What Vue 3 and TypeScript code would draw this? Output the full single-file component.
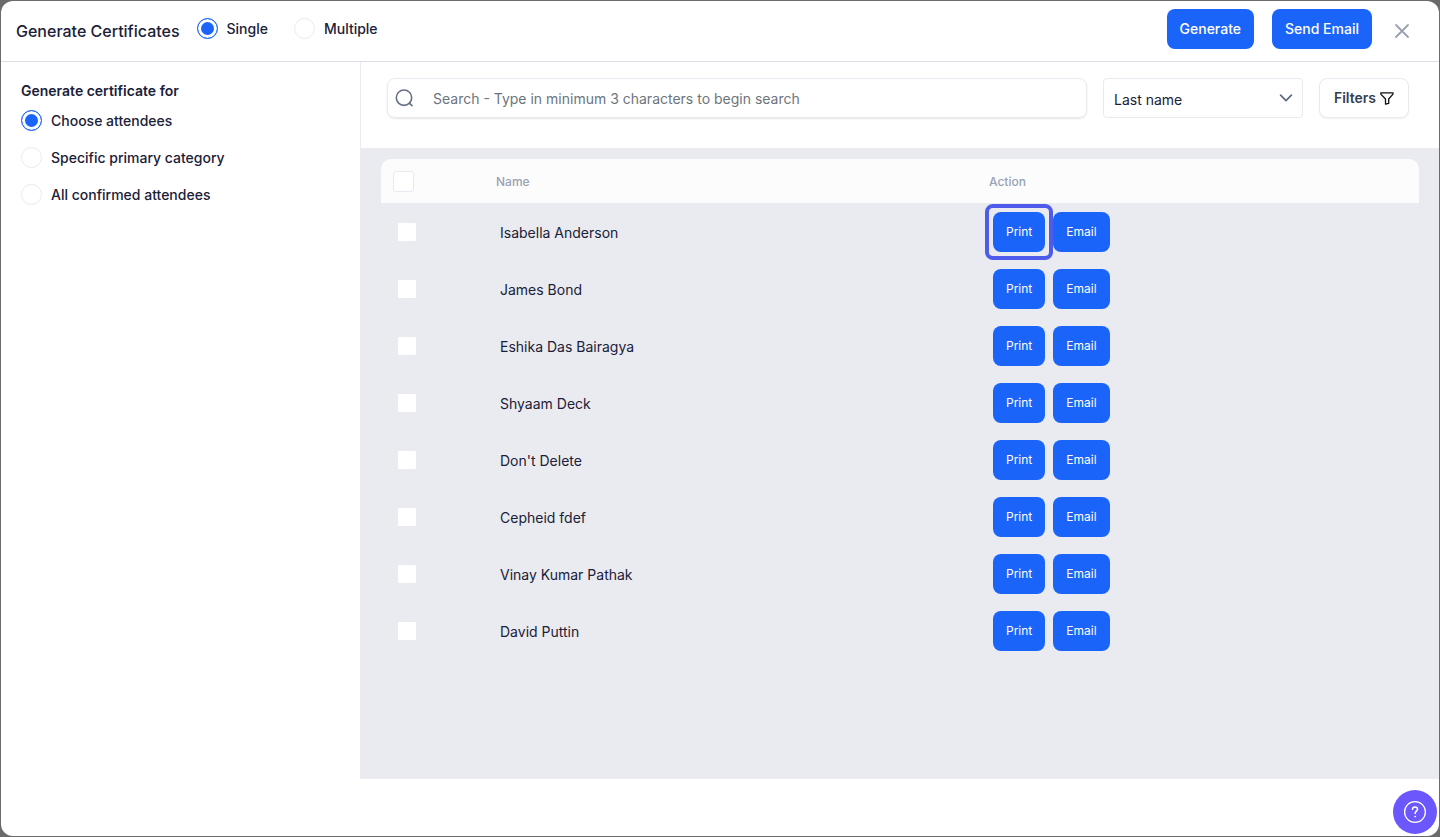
<script setup lang="ts">
import { ref, computed } from 'vue'

interface Attendee {
  id: number
  name: string
}

const attendees: Attendee[] = [
  'Isabella Anderson',
  'James Bond',
  'Eshika Das Bairagya',
  'Shyaam Deck',
  "Don't Delete",
  'Cepheid fdef',
  'Vinay Kumar Pathak',
  'David Puttin',
].map((name, i) => ({ id: i + 1, name }))

const modes = ['Single', 'Multiple']
const audiences = ['Choose attendees', 'Specific primary category', 'All confirmed attendees']

const mode = ref('Single')
const audience = ref('Choose attendees')
const query = ref('')
const sortBy = ref('Last name')
const selected = ref<number[]>([])
const highlighted = ref(1)

const allSelected = computed({
  get: () => selected.value.length === attendees.length,
  set: (on: boolean) => {
    selected.value = on ? attendees.map((a) => a.id) : []
  },
})
</script>

<template>
  <div class="backdrop">
    <div class="dialog" role="dialog" aria-labelledby="dialog-title">
      <header class="header">
        <h1 id="dialog-title" class="title">Generate Certificates</h1>
        <div class="modes" role="radiogroup" aria-label="Certificate mode">
          <label v-for="m in modes" :key="m" class="option">
            <input v-model="mode" class="radio" type="radio" name="mode" :value="m" />
            <span>{{ m }}</span>
          </label>
        </div>
        <div class="header-actions">
          <button type="button" class="primary">Generate</button>
          <button type="button" class="primary">Send Email</button>
          <button type="button" class="close" aria-label="Close">
            <svg width="16" height="16" viewBox="0 0 16 16" fill="none" stroke="#98a2b3" stroke-width="1.8" stroke-linecap="round">
              <path d="M2 2l12 12M14 2L2 14" />
            </svg>
          </button>
        </div>
      </header>

      <div class="body">
        <aside class="sidebar">
          <h2 id="audience-title" class="sidebar-title">Generate certificate for</h2>
          <div class="audiences" role="radiogroup" aria-labelledby="audience-title">
            <label v-for="a in audiences" :key="a" class="option">
              <input v-model="audience" class="radio" type="radio" name="audience" :value="a" />
              <span>{{ a }}</span>
            </label>
          </div>
        </aside>

        <main class="main">
          <div class="toolbar">
            <label class="search">
              <svg width="20" height="20" viewBox="0 0 20 20" fill="none" stroke="#667085" stroke-width="1.6" stroke-linecap="round">
                <circle cx="10" cy="9.7" r="7.7" />
                <path d="M15.4 15.2l2.6 2.5" />
              </svg>
              <input
                v-model="query"
                type="text"
                aria-label="Search"
                placeholder="Search - Type in minimum 3 characters to begin search"
              />
            </label>
            <div class="select-wrap">
              <select v-model="sortBy" aria-label="Sort by">
                <option>Last name</option>
                <option>First name</option>
              </select>
              <svg class="chevron" width="14" height="10" viewBox="0 0 14 10" fill="none" stroke="#5d6b82" stroke-width="1.7" stroke-linecap="round" stroke-linejoin="round">
                <path d="M1.6 2.2L7 7.6l5.400-5.400" />
              </svg>
            </div>
            <button type="button" class="filters">
              <span>Filters</span>
              <svg width="14" height="14" viewBox="0 0 14 14" fill="none" stroke="#111" stroke-width="1.3" stroke-linejoin="round">
                <path d="M.8 1.900h12.200v1.200L8.700 8v4.400L5.500 13.200V8L.8 3.100z" />
              </svg>
            </button>
          </div>

          <div class="list">
            <table>
              <colgroup>
                <col class="col-check" />
                <col class="col-name" />
                <col />
              </colgroup>
              <thead>
                <tr>
                  <th scope="col" class="check-cell">
                    <input v-model="allSelected" class="check check-all" type="checkbox" aria-label="Select all" />
                  </th>
                  <th scope="col">Name</th>
                  <th scope="col">Action</th>
                </tr>
              </thead>
              <tbody>
                <tr v-for="a in attendees" :key="a.id">
                  <td class="check-cell">
                    <input v-model="selected" class="check" type="checkbox" :value="a.id" :aria-label="'Select ' + a.name" />
                  </td>
                  <td>{{ a.name }}</td>
                  <td>
                    <div class="row-actions">
                      <button type="button" class="small" :class="{ highlighted: a.id === highlighted }" @click="highlighted = a.id">Print</button>
                      <button type="button" class="small">Email</button>
                    </div>
                  </td>
                </tr>
              </tbody>
            </table>
          </div>
        </main>
      </div>

      <button type="button" class="help" aria-label="Help">
        <svg width="24" height="24" viewBox="0 0 24 24" fill="none" stroke="#fff" stroke-linecap="round" stroke-linejoin="round">
          <circle cx="12" cy="12" r="10.400" stroke-width="1.300" />
          <path d="M9.500 9.300c0-1.500 1.100-2.400 2.500-2.400s2.500.9 2.500 2.300c0 1.900-2.400 2-2.400 4.200" stroke-width="1.500" />
          <circle cx="12.100" cy="16.600" r=".5" fill="#fff" stroke-width=".8" />
        </svg>
      </button>
    </div>
  </div>
</template>

<style>
body {
  margin: 0;
  background: #6b6b6b;
}
</style>

<style scoped>
* {
  box-sizing: border-box;
}

.backdrop {
  min-height: 100vh;
  padding: 1px;
  display: flex;
  background: #6b6b6b;
  color: #1a2138;
  font: 400 14px/20px Inter, "Liberation Sans", sans-serif;
}

.dialog {
  flex: 1;
  min-width: 0;
  display: flex;
  flex-direction: column;
  background: #fff;
  border-radius: 12px;
}

button,
input,
select {
  font: inherit;
  color: inherit;
}

button {
  cursor: pointer;
}

.header {
  height: 61px;
  flex: none;
  display: flex;
  align-items: center;
  padding: 0 29px 0 15px;
  border-bottom: 1px solid #dcdfe8;
}

.title {
  margin: 0;
  font-size: 16px;
  line-height: 24px;
  font-weight: 500;
}

.modes {
  display: flex;
  gap: 26px;
  margin-left: 17px;
  padding-bottom: 5px;
}

.option {
  display: flex;
  align-items: center;
  gap: 9px;
  font-weight: 500;
}

.radio {
  appearance: none;
  flex: none;
  width: 21px;
  height: 21px;
  margin: 0;
  border: 1px solid #e9eaf1;
  border-radius: 50%;
  background: #fff;
}

.radio:checked {
  border-color: #1b64fa;
  background: #1b64fa;
  box-shadow: inset 0 0 0 3px #fff;
}

.header-actions {
  display: flex;
  align-items: center;
  gap: 18px;
  margin-left: auto;
}

.primary {
  height: 40px;
  margin-bottom: 4px;
  padding: 0 13px;
  border: 0;
  border-radius: 8px;
  background: #1b64fa;
  color: #fff;
  font-weight: 500;
}

.close {
  display: flex;
  margin-left: 4px;
  padding: 0;
  border: 0;
  background: none;
}

.body {
  flex: 1;
  display: flex;
  padding-bottom: 57px;
}

.sidebar {
  width: 359px;
  flex: none;
  padding: 19px 20px;
}

.sidebar-title {
  margin: 0 0 9px;
  font-size: 14px;
  line-height: 20px;
  font-weight: 600;
}

.audiences {
  display: flex;
  flex-direction: column;
  gap: 16px;
}

.main {
  flex: 1;
  min-width: 0;
  display: flex;
  flex-direction: column;
  border-left: 1px solid #eaebf0;
}

.toolbar {
  display: flex;
  gap: 16px;
  padding: 16px 30px 30px 26px;
}

.search {
  flex: 1;
  min-width: 0;
  height: 40px;
  display: flex;
  align-items: center;
  gap: 19px;
  padding: 0 6px;
  border: 1px solid #e9eaf1;
  border-radius: 8px;
  box-shadow: 0 1px 2px rgba(16, 24, 40, 0.1);
}

.search svg {
  flex: none;
}

.search input {
  flex: 1;
  min-width: 0;
  padding: 2px 0 0;
  border: 0;
  outline: 0;
  background: none;
}

.search input::placeholder {
  color: #6c757d;
  opacity: 1;
}

.select-wrap {
  position: relative;
  width: 200px;
  height: 40px;
}

.select-wrap select {
  appearance: none;
  width: 100%;
  height: 100%;
  padding: 3px 32px 0 10px;
  border: 1px solid #e9eaf1;
  border-radius: 4px;
  background: #fff;
}

.chevron {
  position: absolute;
  right: 10px;
  top: 15px;
  pointer-events: none;
}

.filters {
  width: 90px;
  height: 40px;
  display: flex;
  align-items: center;
  justify-content: center;
  gap: 4px;
  padding: 0;
  border: 1px solid #e9eaf1;
  border-radius: 8px;
  background: #fff;
  box-shadow: 0 1px 2px rgba(16, 24, 40, 0.06);
  color: #344054;
  font-weight: 600;
}

.list {
  flex: 1;
  padding: 11px 20px 20px;
  background: #eaebf0;
}

table {
  width: 100%;
  table-layout: fixed;
  border-collapse: separate;
  border-spacing: 0;
}

.col-check {
  width: 103px;
}

.col-name {
  width: 493px;
}

th {
  height: 44px;
  padding: 2px 12px 0;
  background: #fcfcfc;
  color: #98a2b3;
  font-size: 12px;
  line-height: 18px;
  font-weight: 500;
  text-align: left;
}

th:first-child {
  border-top-left-radius: 10px;
}

th:last-child {
  border-top-right-radius: 10px;
}

td {
  height: 57px;
  padding: 3px 16px 0;
}

th.check-cell {
  padding: 0 12px;
}

td.check-cell {
  padding: 0 17px;
}

td:last-child {
  padding-top: 0;
}

.check {
  appearance: none;
  display: block;
  width: 18px;
  height: 18px;
  margin: 0;
  border-radius: 1px;
  background: #fff;
}

.check-all {
  width: 21px;
  height: 21px;
  border: 1px solid #e9eaef;
  border-radius: 3px;
}

.check:checked {
  background: #1b64fa;
}

.row-actions {
  display: flex;
  gap: 8px;
}

.small {
  position: relative;
  height: 40px;
  padding: 0 13px;
  border: 0;
  border-radius: 8px;
  background: #1b64fa;
  color: #fff;
  font-size: 12px;
  line-height: 18px;
}

.highlighted {
  z-index: 1;
}

.highlighted::after {
  content: "";
  position: absolute;
  inset: -8px;
  border: 4px solid #4f5bea;
  border-radius: 8px;
  pointer-events: none;
}

.help {
  position: fixed;
  right: 3px;
  bottom: 3px;
  width: 44px;
  height: 44px;
  display: flex;
  align-items: center;
  justify-content: center;
  padding: 0;
  border: 0;
  border-radius: 50%;
  background: #6b57fb;
}
</style>
